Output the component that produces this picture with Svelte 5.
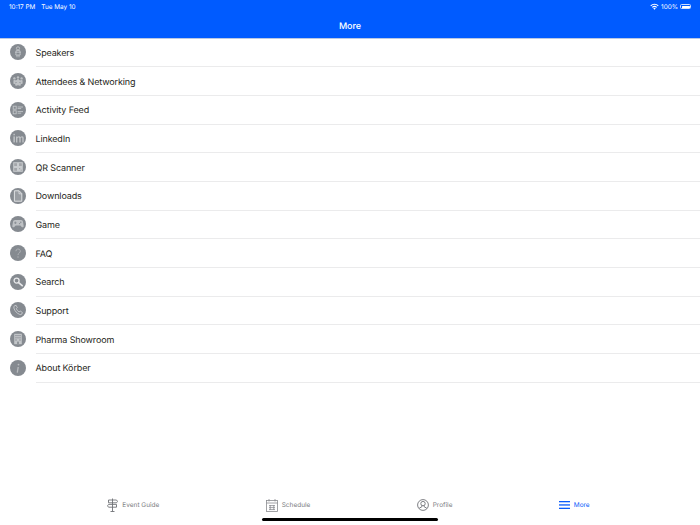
<script>
  const rows = [
    { label: 'Speakers', icon: 'speakers' },
    { label: 'Attendees & Networking', icon: 'attendees' },
    { label: 'Activity Feed', icon: 'feed' },
    { label: 'LinkedIn', icon: 'linkedin' },
    { label: 'QR Scanner', icon: 'qr' },
    { label: 'Downloads', icon: 'downloads' },
    { label: 'Game', icon: 'game' },
    { label: 'FAQ', icon: 'faq' },
    { label: 'Search', icon: 'search' },
    { label: 'Support', icon: 'support' },
    { label: 'Pharma Showroom', icon: 'showroom' },
    { label: 'About Körber', icon: 'about' }
  ];
</script>

<div class="screen">
  <header>
    <div class="status">
      <span class="time">10:17 PM</span>
      <span class="date">Tue May 10</span>
      <span class="spacer"></span>
      <svg class="wifi" width="9" height="7" viewBox="0 0 9 7">
        <path d="M0.3 2.4a6 6 0 0 1 8.4 0l-0.8 0.8a4.9 4.9 0 0 0-6.8 0z" fill="#fff" />
        <path d="M1.9 4a3.7 3.7 0 0 1 5.2 0l-0.8 0.8a2.6 2.6 0 0 0-3.6 0z" fill="#fff" />
        <path d="M3.3 5.4a1.7 1.7 0 0 1 2.4 0L4.5 6.7z" fill="#fff" />
      </svg>
      <span class="pct">100%</span>
      <span class="battery"><span class="charge"></span></span>
    </div>
    <div class="title">More</div>
  </header>

  <ul>
    {#each rows as row}
      <li>
        <svg class="badge" width="16" height="16" viewBox="0 0 16 16">
          <circle cx="8" cy="8" r="8" fill="#858a90" />
          {#if row.icon === 'speakers'}
            <g fill="none" stroke="#c3c6c9" stroke-width="0.9">
              <circle cx="8" cy="4.4" r="1.6" />
              <path d="M5 8.2h6M6.2 6.6h3.6l0.4 4.4H5.8zM7 11v2.3M9 11v2.3" />
            </g>
          {:else if row.icon === 'attendees'}
            <g fill="#bfc2c5">
              <circle cx="4.4" cy="5.4" r="1.2" />
              <circle cx="8" cy="4.4" r="1.2" />
              <circle cx="11.6" cy="5.4" r="1.2" />
              <circle cx="6.2" cy="8.2" r="1.2" />
              <circle cx="9.8" cy="8.2" r="1.2" />
              <rect x="3.4" y="7" width="2" height="4" rx="0.8" />
              <rect x="7" y="6" width="2" height="6.6" rx="0.8" />
              <rect x="10.6" y="7" width="2" height="4" rx="0.8" />
              <rect x="5.2" y="9.8" width="2" height="3" rx="0.8" />
              <rect x="8.8" y="9.8" width="2" height="3" rx="0.8" />
            </g>
          {:else if row.icon === 'feed'}
            <g fill="none" stroke="#c3c6c9" stroke-width="0.9">
              <rect x="3.2" y="4.2" width="3" height="3" />
              <rect x="3.2" y="8.8" width="3" height="3" />
              <path d="M7.6 5h5.4M7.6 6.6h3.6M7.6 9.6h5.4M7.6 11.2h3.6" />
            </g>
          {:else if row.icon === 'linkedin'}
            <g fill="#bfc2c5">
              <rect x="3.4" y="6.4" width="1.5" height="6" />
              <rect x="3.4" y="3.8" width="1.5" height="1.5" />
              <path d="M6 6.4h1.4v0.7c0.3-0.5 0.9-0.9 1.6-0.9 0.8 0 1.3 0.3 1.5 0.9 0.3-0.5 0.9-0.9 1.6-0.9 1.2 0 1.6 0.8 1.6 2v4.2h-1.4V8.6c0-0.7-0.2-1.1-0.7-1.1s-0.9 0.4-0.9 1.1v3.8H9.3V8.6c0-0.7-0.2-1.1-0.7-1.1s-1.2 0.4-1.2 1.1v3.8H6z" />
            </g>
          {:else if row.icon === 'qr'}
            <rect x="3.2" y="3.2" width="9.6" height="9.6" fill="#c9cccf" />
            <g fill="#a3a6aa">
              <rect x="4.2" y="4.2" width="2.8" height="2.8" />
              <rect x="9" y="4.2" width="2.8" height="2.8" />
              <rect x="4.2" y="9" width="2.8" height="2.8" />
              <rect x="9" y="9" width="1.2" height="1.2" />
              <rect x="10.6" y="10.6" width="1.2" height="1.2" />
            </g>
          {:else if row.icon === 'downloads'}
            <path d="M4.4 2.8h4.8l2.6 2.8v7.6H4.4z" fill="#9a9ea3" stroke="#dfe1e3" stroke-width="1" />
            <path d="M9 3v2.8h2.8" fill="none" stroke="#dfe1e3" stroke-width="0.8" />
          {:else if row.icon === 'game'}
            <path d="M5 4h6c1.2 0 1.8 0.7 2 1.8l0.7 4.2c0.2 1.2-1.2 1.8-2 0.9L10.4 9.6H5.6l-1.3 1.3c-0.8 0.9-2.2 0.3-2-0.9L3 5.8c0.2-1.1 0.8-1.8 2-1.8z" fill="#bfc2c5" />
            <path d="M4.2 6.8h2.4M5.4 5.6V8" stroke="#858a90" stroke-width="0.8" />
            <circle cx="10.8" cy="6.2" r="0.7" fill="#858a90" />
            <circle cx="9.6" cy="7.6" r="0.7" fill="#858a90" />
          {:else if row.icon === 'faq'}
            <path d="M5.9 6.2a2.2 2.2 0 1 1 3.3 1.9c-0.8 0.5-1.2 0.9-1.2 2" fill="none" stroke="#aeb1b5" stroke-width="1" />
            <circle cx="8" cy="12" r="0.7" fill="#aeb1b5" />
          {:else if row.icon === 'search'}
            <circle cx="6.6" cy="6.6" r="2.5" fill="none" stroke="#e6e7e9" stroke-width="1.3" />
            <path d="M8.6 8.6l3.6 3" stroke="#e6e7e9" stroke-width="1.8" stroke-linecap="round" />
          {:else if row.icon === 'support'}
            <path d="M4.4 3.8l1.7-0.5 1.2 2.4-1 1c0.5 1.3 1.4 2.4 2.8 3.2l1.1-0.9 2.2 1.5-0.6 1.6c-0.4 0.6-1.2 0.7-2 0.4-3-1.2-5-3.4-5.9-6.4-0.1-0.9 0-1.9 0.5-2.3z" fill="none" stroke="#c9cccf" stroke-width="0.9" />
          {:else if row.icon === 'showroom'}
            <rect x="4.2" y="2.8" width="7.6" height="10.4" fill="#c3c6c9" />
            <g fill="#858a90">
              <rect x="5.4" y="4" width="1.2" height="1.2" />
              <rect x="7.4" y="4" width="1.2" height="1.2" />
              <rect x="9.4" y="4" width="1.2" height="1.2" />
              <rect x="5.4" y="6.2" width="1.2" height="1.2" />
              <rect x="7.4" y="6.2" width="1.2" height="1.2" />
              <rect x="9.4" y="6.2" width="1.2" height="1.2" />
              <rect x="5.4" y="8.4" width="1.2" height="1.2" />
              <rect x="9.4" y="8.4" width="1.2" height="1.2" />
              <rect x="7.2" y="10.6" width="1.6" height="2.6" />
            </g>
          {:else if row.icon === 'about'}
            <circle cx="8.5" cy="4.6" r="0.9" fill="#b9bcbf" />
            <path d="M8.2 7l-0.9 5.6" stroke="#b9bcbf" stroke-width="1.3" />
          {/if}
        </svg>
        <span class="label">{row.label}</span>
      </li>
    {/each}
  </ul>

  <nav>
    <div class="tab">
      <svg width="11" height="14" viewBox="0 0 11 14" fill="none" stroke="#6f7276" stroke-width="0.9">
        <path d="M5.5 0.5v13M3.5 13.5h4" />
        <path d="M1.5 2h8l1 1.4-1 1.4h-8zM9.5 6.4h-8l-1 1.4 1 1.4h8z" />
      </svg>
      <span>Event Guide</span>
    </div>
    <div class="tab">
      <svg width="12" height="13" viewBox="0 0 12 13" fill="none" stroke="#8a8c90" stroke-width="0.8">
        <rect x="0.5" y="1.5" width="11" height="11" />
        <path d="M0.5 4h11M3 6.6h6M3 8.6h6M3 10.6h6M3 0v2.5M9 0v2.5M4.2 6v5M7.8 6v5" />
      </svg>
      <span>Schedule</span>
    </div>
    <div class="tab">
      <svg width="12" height="12" viewBox="0 0 12 12" fill="none" stroke="#6f7276" stroke-width="0.9">
        <circle cx="6" cy="6" r="5.4" />
        <circle cx="6" cy="4.6" r="2.2" />
        <path d="M4.8 6.6v1.2l-2.6 1.4M7.2 6.6v1.2l2.6 1.4" />
      </svg>
      <span>Profile</span>
    </div>
    <div class="tab active">
      <svg width="11" height="8" viewBox="0 0 11 8" fill="#0a5cfb">
        <rect width="11" height="1.3" />
        <rect y="3.3" width="11" height="1.3" />
        <rect y="6.7" width="11" height="1.3" />
      </svg>
      <span>More</span>
    </div>
  </nav>

  <div class="home"></div>
</div>

<style>
  :global(body) { margin: 0; background: #fff; }
  .screen { position: relative; display: flex; flex-direction: column; width: 700px; height: 525px; overflow: hidden; font-family: Inter, "Liberation Sans", sans-serif; color: #1f1f21; text-rendering: geometricPrecision; }
  header { flex: none; height: 38px; margin-bottom: -0.5px; background: #005bff; color: #fff; border-bottom: 1px solid #b9c8e4; }
  .status { display: flex; align-items: center; height: 13px; padding: 0 9px; font-size: 6.4px; font-weight: 400; }
  .date { margin-left: 6px; }
  .spacer { flex: 1; }
  .wifi { margin-right: 2px; }
  .battery { display: flex; width: 11px; height: 5px; margin-left: 2px; padding: 0.5px; border: 0.5px solid #cfe0ff; border-radius: 1.5px; box-sizing: border-box; }
  .charge { flex: 1; background: #fff; border-radius: 0.5px; }
  .title { text-align: center; font-size: 9px; font-weight: 500; line-height: 25px; padding-top: 1px; }
  ul { flex: none; margin: 0; padding: 0; list-style: none; }
  li { display: flex; align-items: center; height: 28.68px; box-sizing: border-box; padding-left: 10px; }
  .badge { flex: none; margin: -1px 9.5px 0 0; }
  .label { display: flex; align-items: center; align-self: stretch; flex: 1; padding-top: 2px; box-sizing: border-box; font-size: 9px; letter-spacing: -0.14px; border-bottom: 1px solid #ebebec; }
  nav { display: flex; justify-content: space-evenly; align-items: center; margin-top: auto; height: 20px; padding: 0 4px 10px 1px; font-size: 6.5px; color: #7e8083; }
  .tab { display: flex; align-items: center; gap: 4px; }
  .active { color: #0a5cfb; }
  .home { position: absolute; left: 262px; bottom: 4px; width: 176px; height: 3px; background: #000; border-radius: 2px; }
</style>
